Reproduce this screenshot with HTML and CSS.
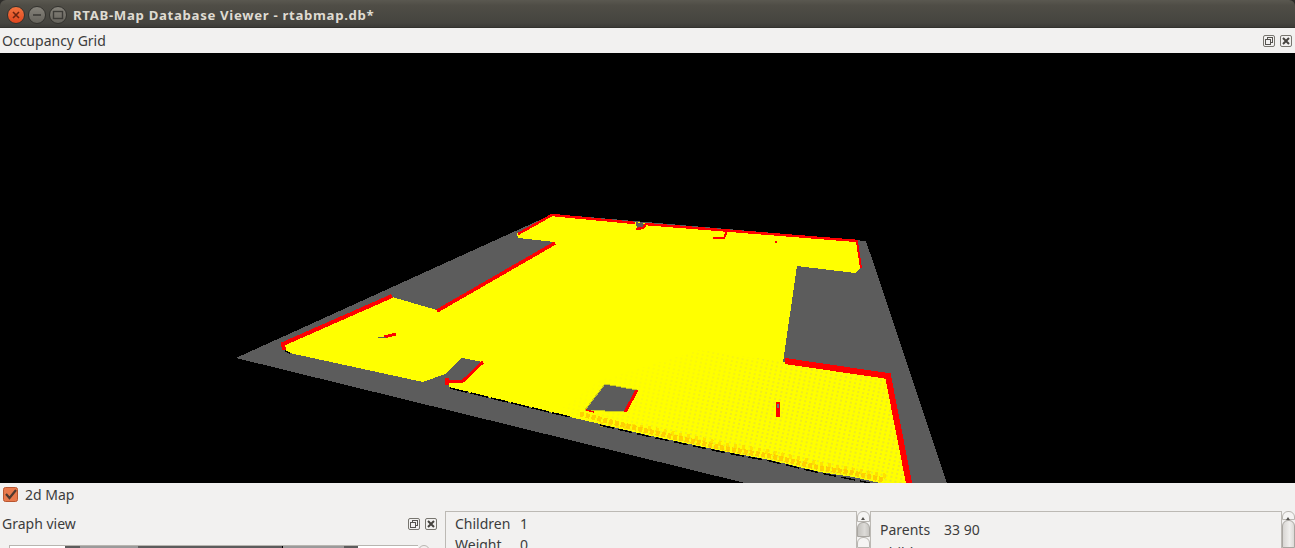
FILE: index.html
```html
<!DOCTYPE html>
<html lang="en">
<head>
    <meta charset="UTF-8">
    <title>RTAB-Map Database Viewer - rtabmap.db*</title>
    <link rel="stylesheet" href="styles.css">
</head>
<body>
    <header class="titlebar">
        <div class="win-buttons">
            <span class="win-btn close">
                <svg width="8" height="8" viewBox="0 0 8 8"><path d="M1 1L7 7M7 1L1 7" stroke="#6b2410" stroke-width="1.6"/></svg>
            </span>
            <span class="win-btn">
                <svg width="10" height="8" viewBox="0 0 10 8"><path d="M1 4H9" stroke="#3c3b37" stroke-width="1.6"/></svg>
            </span>
            <span class="win-btn">
                <svg width="12" height="10" viewBox="0 0 12 10"><rect x="1.5" y="1.5" width="9" height="7" fill="none" stroke="#3c3b37" stroke-width="1.4"/></svg>
            </span>
        </div>
        <span class="win-title">RTAB-Map Database Viewer - rtabmap.db*</span>
    </header>

    <div class="dock-header top-dock">
        <span>Occupancy Grid</span>
        <div class="dock-buttons wide">
            <svg class="dock-icon" viewBox="0 0 12 12"><rect x="0.5" y="0.5" width="11" height="11" rx="1.5" fill="none" stroke="#77756f"/><rect x="4.5" y="2.5" width="5" height="5" fill="none" stroke="#55534f"/><rect x="2.5" y="4.5" width="5" height="5" fill="#f2f1f0" stroke="#55534f"/></svg>
            <svg class="dock-icon" viewBox="0 0 12 12"><rect x="0.5" y="0.5" width="11" height="11" rx="1.5" fill="none" stroke="#77756f"/><path d="M3 3L9 9M9 3L3 9" stroke="#45433f" stroke-width="2"/></svg>
        </div>
    </div>

    <main class="map-view">
        <svg class="map-svg" width="1295" height="430" viewBox="0 53 1295 430" shape-rendering="crispEdges">
            <defs>
                <pattern id="dots" width="5" height="4" patternUnits="userSpaceOnUse" patternTransform="rotate(12)">
                    <rect width="5" height="4" fill="#ffff00"/>
                    <rect x="0" y="0" width="2" height="2" fill="#eeea22"/>
                </pattern>
                <linearGradient id="fade" gradientUnits="userSpaceOnUse" x1="640" y1="340" x2="700" y2="440">
                    <stop offset="0" stop-color="#fff" stop-opacity="0"/>
                    <stop offset="1" stop-color="#fff" stop-opacity="1"/>
                </linearGradient>
                <mask id="fade-mask">
                    <rect x="0" y="53" width="1295" height="430" fill="url(#fade)"/>
                </mask>
            </defs>

            <polygon points="553,214 866,241 947,483 745,483 236,358" fill="#5c5c5c"/>

            <path fill="#ffff00" d="M552 215 L858 241 L861 268 L855 273 L797 266 L783 362 L888 376 L909 483 L880 483 L853 477 L820 472 L770 460 L727 452 L647 435 L570 417 L450 388 L447 382 L460 382 L483 362 L462 358 L445 374 L423 382 L285 352 L283 344 L392 297 L437 310 L555 242 L518 238 L517 233 Z"/>

            <path fill="url(#dots)" mask="url(#fade-mask)" d="M783 362 L888 376 L909 483 L880 483 L853 477 L820 472 L770 460 L727 452 L647 435 L570 417 L560 410 L600 380 L700 350 Z"/>

            <polygon points="605,384 637,390 625,412 585,410" fill="#5c5c5c" stroke="#c8c820"/>
            <polygon points="636,222 645,224 643,229 637,229" fill="#5c5c5c"/>

            <g fill="none" stroke-width="5">
                <path stroke="#ffb000" stroke-opacity="0.6" stroke-dasharray="4 2" d="M580 414 L647 431 L727 449 L770 456 L820 468 L853 473 L884 480"/>
                <path stroke="#ffc800" stroke-opacity="0.5" stroke-dasharray="3 5" d="M600 424 L647 428 L727 445 L770 452 L820 464 L890 477"/>
            </g>
            <g fill="none" stroke="#000" stroke-width="1.5">
                <path stroke-dasharray="18 3" d="M450 388 L520 405 L570 417"/>
                <path stroke-dasharray="14 5" d="M600 425 L647 436 L727 453 L770 461 L820 473 L870 483"/>
                <path d="M285 351 L290 353"/>
            </g>

            <g fill="none" stroke="#ff0000">
                <path stroke-width="2.5" d="M518 234 L552 215 L635 223 M645 224 L858 241"/>
                <path stroke-width="2.5" d="M636 229 L643 228 L646 224"/>
                <path stroke-width="2" d="M713 238 L724 238 L727 231"/>
                <path stroke-width="2" d="M857 242 L861 268"/>
                <path stroke-width="3.5" d="M555 243 L437 311"/>
                <path stroke-width="4" d="M392 296 L283 344 L284 350"/>
                <path stroke-width="3" d="M483 362 L463 381 L447 382"/>
                <path stroke-width="4" d="M447 378 L447 385"/>
                <path stroke-width="3" d="M637 390 L625 412"/>
                <path stroke-width="1.5" d="M586 410 L594 412"/>
                <path stroke-width="6" d="M785 361 L888 376 L909 483"/>
                <path stroke-width="3" d="M384 337 L396 334"/>
                <path stroke-width="4" d="M778 402 L778 417"/>
                <path stroke-width="2" d="M775 242 L777 242"/>
            </g>
            <path d="M378 337 L386 338" stroke="#5c5c5c" stroke-width="1"/>
            <path d="M778 404 L778 408" stroke="#5c7c80" stroke-width="2"/>
        </svg>
    </main>

    <div class="checkbox-row">
        <svg class="check" viewBox="0 0 15 15">
            <rect x="0.5" y="0.5" width="14" height="14" rx="2" fill="#e8794c" stroke="#b8552f"/>
            <path d="M3 7L6.5 11L13 3" fill="none" stroke="#4f3a30" stroke-width="2.2"/>
        </svg>
        <span>2d Map</span>
    </div>

    <section class="bottom-row">
        <div class="graph-dock">
            <div class="dock-header">
                <span>Graph view</span>
                <div class="dock-buttons narrow">
                    <svg class="dock-icon" viewBox="0 0 12 12"><rect x="0.5" y="0.5" width="11" height="11" rx="1.5" fill="none" stroke="#77756f"/><rect x="4.5" y="2.5" width="5" height="5" fill="none" stroke="#55534f"/><rect x="2.5" y="4.5" width="5" height="5" fill="#f2f1f0" stroke="#55534f"/></svg>
                    <svg class="dock-icon" viewBox="0 0 12 12"><rect x="0.5" y="0.5" width="11" height="11" rx="1.5" fill="none" stroke="#77756f"/><path d="M3 3L9 9M9 3L3 9" stroke="#45433f" stroke-width="2"/></svg>
                </div>
            </div>
            <div class="graph-area">
                <div class="graph-box">
                    <span class="seg blank-a"></span>
                    <span class="seg dark-a"></span>
                    <span class="seg light-a"></span>
                    <span class="seg dark-b"></span>
                    <span class="seg light-b"></span>
                    <span class="seg dark-c"></span>
                </div>
                <div class="scroll-dot"></div>
            </div>
        </div>

        <div class="info-panel children-panel">
            <div class="info-line"><span class="key key-a">Children</span><span>1</span></div>
            <div class="info-line"><span class="key key-a">Weight</span><span>0</span></div>
        </div>
        <div class="scrollbar">
            <div class="scroll-btn"><span class="arrow"></span></div>
            <div class="scroll-thumb"></div>
            <div class="scroll-btn"></div>
        </div>

        <div class="info-panel parents-panel">
            <div class="info-line"><span class="key key-b">Parents</span><span>33 90</span></div>
            <div class="info-line"><span class="key key-b">Children</span><span>1</span></div>
        </div>
        <div class="scrollbar">
            <div class="scroll-btn"><span class="arrow"></span></div>
            <div class="scroll-thumb pale"></div>
        </div>
    </section>
</body>
</html>
```

FILE: styles.css
```css
html, body {
    margin: 0;
    height: 548px;
    overflow: hidden;
}
body {
    display: flex;
    flex-direction: column;
    background-color: #2e2d2a;
    color: #3c3c3c;
    font-family: "Noto Sans", "Open Sans", sans-serif;
    font-size: 14px;
}
.titlebar {
    flex: 0 0 25px;
    display: flex;
    align-items: center;
    padding: 2px 0 0 7px;
    background: linear-gradient(#5a5850, #4f4d46 20%, #45443f 85%, #3c3b37);
    border-radius: 6px 6px 0 0;
    border-bottom: 1px solid #33322e;
    box-sizing: content-box;
}
.win-buttons {
    display: flex;
    gap: 3px;
    width: 66px;
}
.win-btn {
    width: 16px;
    height: 16px;
    border-radius: 50%;
    display: flex;
    align-items: center;
    justify-content: center;
    background: linear-gradient(#85827a, #65635c);
    border: 0.5px solid #33322e;
}
.win-btn.close {
    background: linear-gradient(#f2743f, #e0461f);
}
.win-title {
    color: #dfdbd2;
    font-weight: bold;
    font-size: 13.2px;
    letter-spacing: 0.68px;
}
.dock-header, .checkbox-row, .bottom-row {
    background-color: #f2f1f0;
}
.dock-header {
    display: flex;
    align-items: center;
    justify-content: space-between;
    padding-left: 2px;
}
.top-dock {
    flex: 0 0 25px;
}
.dock-buttons {
    display: flex;
}
.dock-buttons.wide {
    gap: 5px;
    padding-right: 3px;
}
.dock-buttons.narrow {
    gap: 5px;
    padding-right: 8px;
}
.dock-icon {
    width: 12px;
    height: 12px;
}
.graph-dock .dock-header span {
    margin-top: -2px;
}
.map-view {
    flex: 0 0 430px;
    background-color: #000;
    overflow: hidden;
}
.map-svg {
    display: block;
}
.checkbox-row {
    flex: 0 0 28px;
    display: flex;
    align-items: flex-start;
    gap: 7px;
    padding: 4px 0 0 3px;
    box-sizing: border-box;
}
.check {
    width: 15px;
    height: 15px;
    flex: none;
}
.checkbox-row span {
    line-height: 17px;
    margin-top: -1px;
}
.bottom-row {
    flex: 1;
    display: flex;
    min-height: 0;
}
.graph-dock {
    flex: 0 0 445px;
    display: flex;
    flex-direction: column;
}
.graph-dock .dock-header {
    flex: 0 0 26px;
}
.graph-area {
    display: flex;
    padding: 8px 0 0 9px;
}
.graph-box {
    width: 408px;
    height: 20px;
    display: flex;
    background-color: #fff;
    border-top: 1px solid #b8b5b0;
    border-left: 1px solid #b8b5b0;
}
.seg {
    height: 100%;
}
.blank-a { width: 55px; }
.dark-a { width: 15px; background-color: #5c5c5c; }
.light-a { width: 58px; background-color: #9a9a9a; }
.dark-b { width: 144px; background-color: #5c5c5c; border-right: 1px solid #000; }
.light-b { width: 61px; background-color: #9a9a9a; }
.dark-c { width: 14px; background-color: #5c5c5c; }
.scroll-dot {
    width: 10px;
    height: 10px;
    border-radius: 50%;
    border: 1px solid #b8b5b0;
    background-color: #f2f1f0;
}
.info-panel {
    box-sizing: border-box;
    border: 1px solid #bcb9b4;
    border-bottom: none;
    height: 60px;
    padding-left: 9px;
    flex: 0 0 412px;
}
.children-panel {
    padding-top: 1px;
}
.parents-panel {
    padding-top: 6px;
}
.info-line {
    display: flex;
    height: 21px;
    line-height: 21px;
}
.parents-panel .info-line {
    height: 23px;
    line-height: 23px;
}
.key-a { width: 65px; }
.key-b { width: 64px; }
.scrollbar {
    flex: 0 0 13px;
    display: flex;
    flex-direction: column;
}
.scroll-btn {
    height: 13px;
    box-sizing: border-box;
    border: 1px solid #b8b5b0;
    border-radius: 6px 6px 0 0;
    background-color: #f5f4f3;
    position: relative;
}
.arrow {
    position: absolute;
    left: 3px;
    top: 5px;
    border-left: 2px solid transparent;
    border-right: 2px solid transparent;
    border-bottom: 3px solid #55534f;
}
.scroll-thumb {
    height: 19px;
    box-sizing: border-box;
    border: 1px solid #a9a6a1;
    border-radius: 6px 6px 0 0;
    background: linear-gradient(90deg, #c4c2be, #dddbd8 60%, #c8c6c2);
}
.scroll-thumb.pale {
    height: 40px;
    background: linear-gradient(90deg, #d8d6d3, #f0efed 60%, #dcdad7);
}
```
